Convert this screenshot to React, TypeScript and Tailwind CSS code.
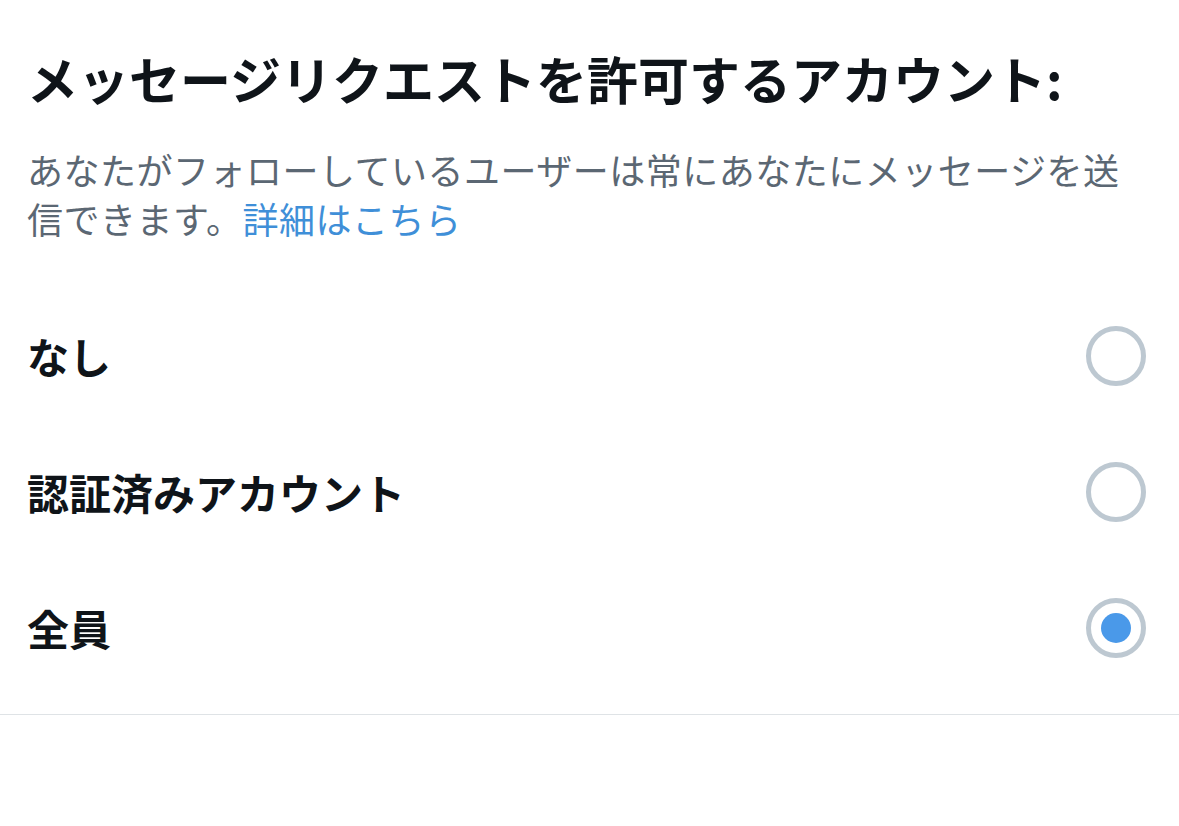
import React from "react";

const options = [
  { label: "なし", checked: false },
  { label: "認証済みアカウント", checked: false },
  { label: "全員", checked: true },
];

function Radio({ checked }: { checked: boolean }) {
  return (
    <div className="w-[60px] h-[60px] rounded-full border-[5px] border-[#bdc8d1] flex items-center justify-center shrink-0">
      {checked && <div className="w-[30px] h-[30px] rounded-full bg-[#4a99e9]" />}
    </div>
  );
}

export default function App() {
  return (
    <div
      className="w-[1179px] h-[826px] bg-white overflow-hidden"
      style={{ fontFamily: '"Noto Sans CJK JP", "Noto Sans", sans-serif' }}
    >
      <div className="pl-[27px] pr-[33px] pt-[48px]">
        <h1 className="text-[51px] leading-[60px] font-bold text-[#0f1419] whitespace-nowrap">
          メッセージリクエストを許可するアカウント:
        </h1>
        <p className="mt-[37px] max-w-[1110px] text-[36px] leading-[49px] tracking-[0.5px] text-[#5b6773]">
          あなたがフォローしているユーザーは常にあなたにメッセージを送信できます。
          <span className="text-[#3f8fd8]">詳細はこちら</span>
        </p>
        <div className="mt-[45px] flex flex-col">
          {options.map((o) => (
            <div key={o.label} className="h-[136px] flex items-center justify-between">
              <span className="text-[42px] leading-[50px] font-bold text-[#0f1419]">{o.label}</span>
              <Radio checked={o.checked} />
            </div>
          ))}
        </div>
      </div>
      <div className="mt-[18px] h-px bg-[#dfe3e6]" />
    </div>
  );
}
